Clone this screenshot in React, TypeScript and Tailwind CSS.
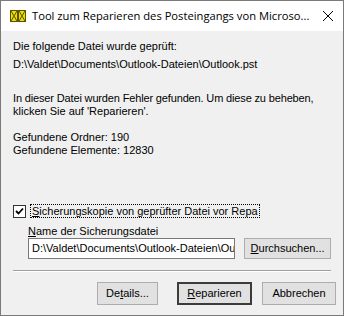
import React from "react";

const body = { fontFamily: '"Liberation Sans", Arial, sans-serif' };

function Btn({ children, def = false, className = "" }: { children: React.ReactNode; def?: boolean; className?: string }) {
  return (
    <div
      className={`flex items-center justify-center bg-[#e1e1e1] text-[11px] text-black ${def ? "border-2 border-[#3c3c3c]" : "border border-[#adadad]"} ${className}`}
    >
      {children}
    </div>
  );
}

export default function App() {
  return (
    <div className="w-[344px] h-[316px] border border-[#7a7a7a] bg-[#f0f0f0] flex flex-col" style={body}>
      <div className="h-[30px] bg-white flex items-center shrink-0">
        <svg width="16" height="12" viewBox="0 0 16 12" className="ml-[9px] mr-[6px]">
          <rect x="0.5" y="0.5" width="7" height="11" fill="#e8e000" stroke="#5a5200" />
          <rect x="8.5" y="0.5" width="7" height="11" fill="#e8e000" stroke="#5a5200" />
          <path d="M1 1 L7 11 M7 1 L1 11 M9 1 L15 11 M15 1 L9 11" stroke="#5a5200" strokeWidth="1" />
        </svg>
        <span className="text-[11.2px] text-black whitespace-nowrap" style={{ fontFamily: '"Open Sans", "Noto Sans", sans-serif' }}>
          Tool zum Reparieren des Posteingangs von Microso...
        </span>
        <svg width="10" height="10" viewBox="0 0 10 10" className="ml-auto mr-[10px]">
          <path d="M0 0 L10 10 M10 0 L0 10" stroke="#000" strokeWidth="1" />
        </svg>
      </div>
      <div className="flex flex-col px-[12px] text-[11px] text-black leading-[13px]">
        <div className="mt-[9px]">Die folgende Datei wurde geprüft:</div>
        <div className="mt-[5px]">D:\Valdet\Documents\Outlook-Dateien\Outlook.pst</div>
        <div className="mt-[21px] tracking-[-0.15px]">In dieser Datei wurden Fehler gefunden. Um diese zu beheben,</div>
        <div>klicken Sie auf 'Reparieren'.</div>
        <div className="mt-[13px]">Gefundene Ordner: 190</div>
        <div>Gefundene Elemente: 12830</div>
        <div className="mt-[47px] flex items-center h-[14px]">
          <div className="w-[13px] h-[13px] border border-[#333] bg-white flex items-center justify-center">
            <svg width="9" height="9" viewBox="0 0 9 9">
              <path d="M1 4 L3.5 6.5 L8 1.5" stroke="#000" strokeWidth="1.8" fill="none" />
            </svg>
          </div>
          <div className="ml-[4px] border border-dotted border-black px-[1px] leading-[12px]">
            <span className="underline">S</span>icherungskopie von geprüfter Datei vor Repa
          </div>
        </div>
        <div className="mt-[7px] ml-[15px] leading-[13px]">
          <span className="underline">N</span>ame der Sicherungsdatei
        </div>
        <div className="ml-[15px] flex items-center">
          <div className="w-[210px] h-[21px] border border-[#7a7a7a] bg-white flex items-center pl-[3px] overflow-hidden whitespace-nowrap">
            D:\Valdet\Documents\Outlook-Dateien\Ou
          </div>
          <Btn className="ml-[9px] w-[88px] h-[21px]">
            <span><span className="underline">D</span>urchsuchen...</span>
          </Btn>
        </div>
      </div>
      <div className="mx-[12px] mt-[11px] h-[1px] bg-[#a0a0a0] border-b border-white box-content"></div>
      <div className="flex justify-end px-[7px] mt-[10px] gap-[10px]">
        <Btn className="w-[61px] h-[23px]">
          <span>De<span className="underline">t</span>ails...</span>
        </Btn>
        <Btn def className="w-[75px] h-[23px] ml-[9px]">
          <span><span className="underline">R</span>eparieren</span>
        </Btn>
        <Btn className="w-[74px] h-[23px]">Abbrechen</Btn>
      </div>
    </div>
  );
}
